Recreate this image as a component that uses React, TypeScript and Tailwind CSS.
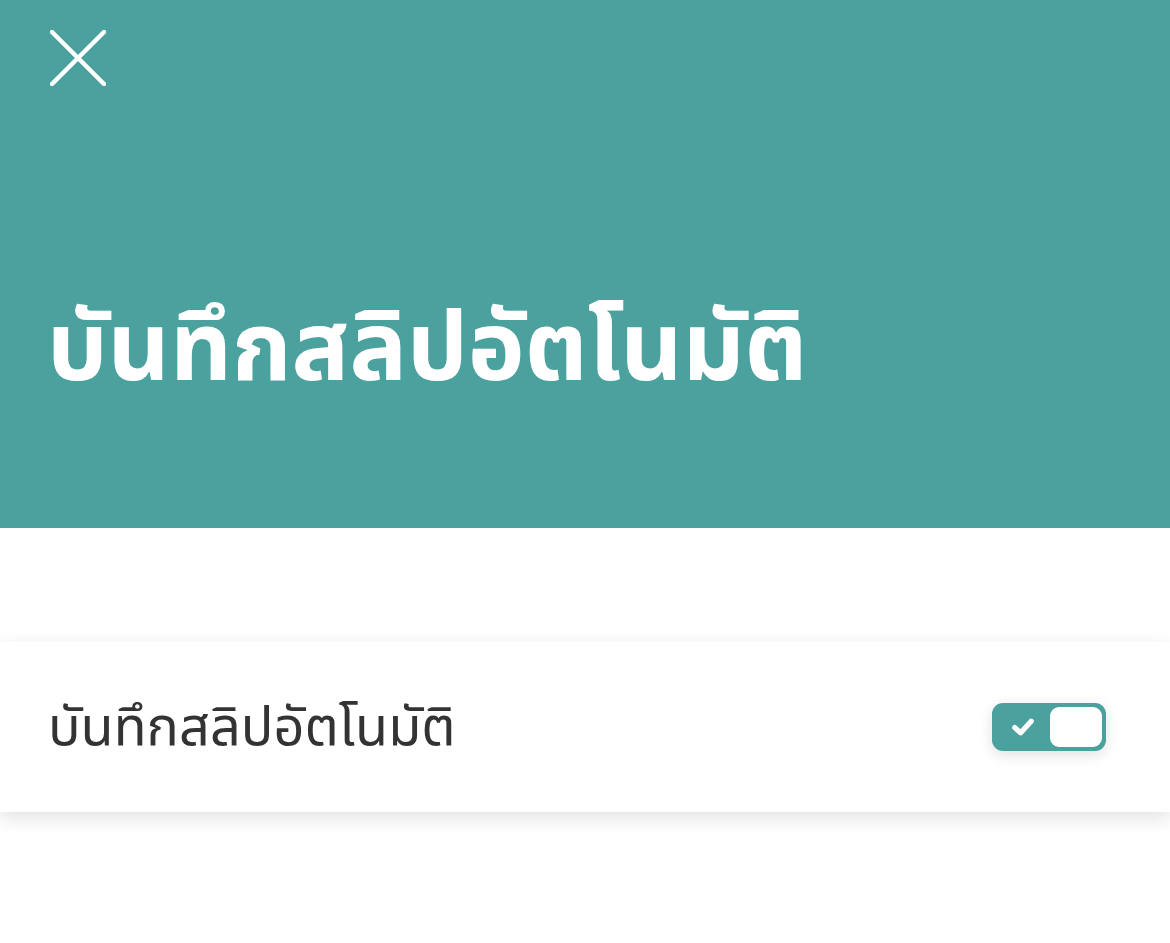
import { useState } from "react";

export default function App() {
  const [enabled, setEnabled] = useState(true);

  return (
    <div className="min-h-[943px] w-full bg-white font-['Noto_Sans','Noto_Sans_Thai','DejaVu_Sans',sans-serif]">
      <header className="h-[528px] bg-[#4aa19e] px-[50px] pt-[30px] flex flex-col">
        <button aria-label="close" className="w-[56px] h-[56px] text-white">
          <svg viewBox="0 0 56 56" className="w-[56px] h-[56px]" fill="none" stroke="currentColor" strokeWidth="4.5" strokeLinecap="round">
            <path d="M2 2 L54 54 M54 2 L2 54" />
          </svg>
        </button>
        <h1 className="mt-[209px] ml-[-3px] text-[96px] leading-[1] font-bold text-white">บันทึกสลิปอัตโนมัติ</h1>
      </header>

      <div className="mt-[114px] bg-white shadow-[0_6px_18px_rgba(0,0,0,0.12)] h-[170px] px-[50px] flex items-center justify-between">
        <span className="ml-[-2px] mt-[-6px] text-[54px] text-[#333333]">บันทึกสลิปอัตโนมัติ</span>
        <button
          onClick={() => setEnabled(!enabled)}
          className="mr-[14px] w-[114px] h-[48px] rounded-[11px] bg-[#4aa19e] p-[4px] flex items-center shadow-[0_4px_14px_rgba(0,0,0,0.12)]"
        >
          <span className="w-[55px] flex justify-center text-white">
            <svg viewBox="0 0 24 24" className="w-[28px] h-[28px]" fill="none" stroke="currentColor" strokeWidth="4.5" strokeLinecap="round" strokeLinejoin="round">
              <path d="M5 12.5 L10 17 L19 7" />
            </svg>
          </span>
          <span className="w-[53px] h-[40px] rounded-[9px] bg-white" />
        </button>
      </div>
    </div>
  );
}
